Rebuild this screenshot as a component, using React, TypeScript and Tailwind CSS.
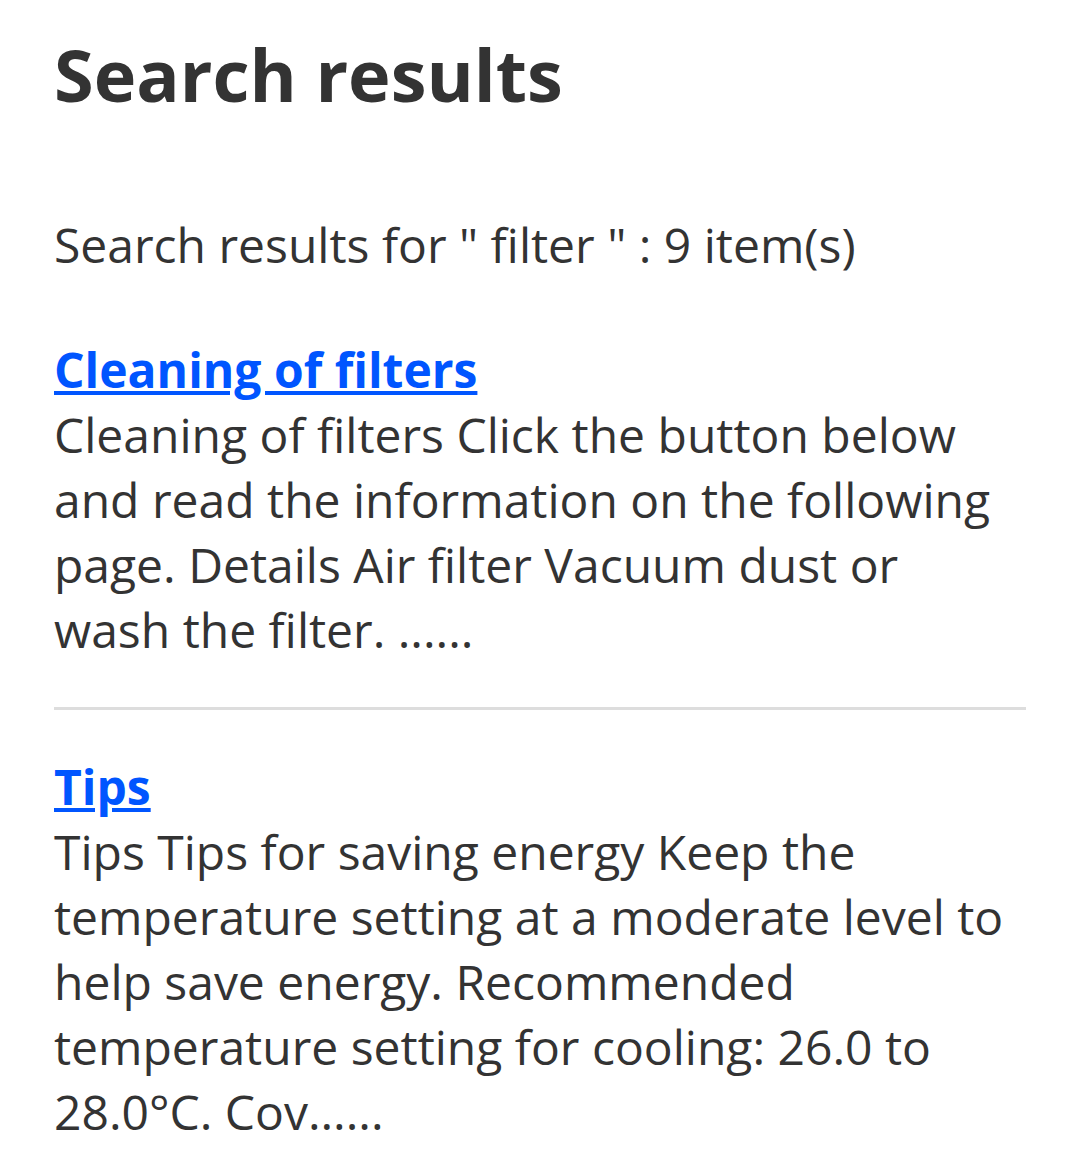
import React from 'react';

type Result = { title: string; excerpt: string };

const results: Result[] = [
  {
    title: 'Cleaning of filters',
    excerpt:
      'Cleaning of filters Click the button below and read the information on the following page. Details Air filter Vacuum dust or wash the filter. ......',
  },
  {
    title: 'Tips',
    excerpt:
      'Tips Tips for saving energy Keep the temperature setting at a moderate level to help save energy. Recommended temperature setting for cooling: 26.0 to 28.0°C. Cov......',
  },
];

const App: React.FC = () => {
  return (
    <div
      className="min-h-screen bg-white pl-[54px] pr-[54px] pt-[25px] text-[#333333]"
      style={{ fontFamily: '"Open Sans", "Liberation Sans", sans-serif' }}
    >
      <h1 className="text-[72px] font-bold leading-[98px] mb-[89px]">Search results</h1>
      <p className="text-[48px] leading-[65px] mb-[60px]">Search results for " filter " : 9 item(s)</p>
      {results.map((r, i) => (
        <div key={r.title}>
          {i > 0 && <hr className="border-0 border-t-[3px] border-[#dddddd] mt-[45px] mb-[44px]" />}
          <a href="#" className="block text-[48px] leading-[65px] font-bold text-[#0055ff] underline">
            {r.title}
          </a>
          <p className="text-[48px] leading-[65px]">{r.excerpt}</p>
        </div>
      ))}
    </div>
  );
};

export default App;
